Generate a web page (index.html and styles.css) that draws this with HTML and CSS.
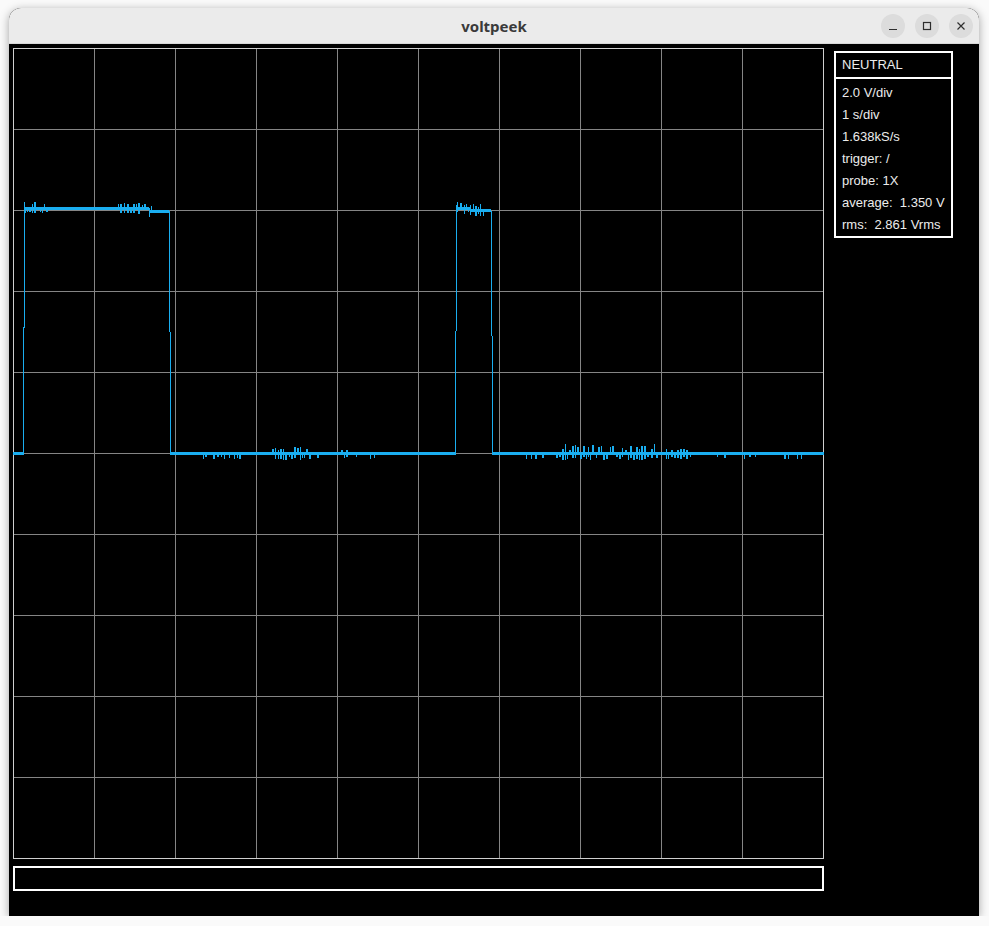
FILE: index.html
```html
<!DOCTYPE html>
<html lang="en">

<head>
    <meta charset="UTF-8">
    <meta name="viewport" content="width=device-width, initial-scale=1.0">
    <title>voltpeek</title>
    <link rel="stylesheet" href="styles.css">
</head>

<body>
    <div class="window">
        <div class="titlebar">
            <span class="title">voltpeek</span>
            <div class="controls">
                <span class="ctl">
                    <svg width="10" height="10" viewBox="0 0 10 10"><path d="M1 8.5H9" /></svg>
                </span>
                <span class="ctl">
                    <svg width="10" height="10" viewBox="0 0 10 10"><rect x="1.5" y="1.5" width="7" height="7" /></svg>
                </span>
                <span class="ctl">
                    <svg width="10" height="10" viewBox="0 0 10 10"><path d="M1.5 1.5L8.5 8.5M8.5 1.5L1.5 8.5" /></svg>
                </span>
            </div>
        </div>
        <div class="content">
            <div class="scope">
                <svg class="screen" width="811" height="811" viewBox="0 0 811 811">
                    <path class="grid" d="M81.5 0V811M162.5 0V811M243.5 0V811M324.5 0V811M405.5 0V811M486.5 0V811M567.5 0V811M648.5 0V811M729.5 0V811
                        M0 81.5H811M0 162.5H811M0 243.5H811M0 324.5H811M0 405.5H811M0 486.5H811M0 567.5H811M0 648.5H811M0 729.5H811" />
                    <rect class="frame" x="0.5" y="0.5" width="810" height="810" />
                    <path class="trace" id="trace" d="" />
                </svg>
                <div class="cmdline"></div>
            </div>
            <div class="panel">
                <div class="mode">NEUTRAL</div>
                <div class="readout">
                    <p>2.0 V/div</p>
                    <p>1 s/div</p>
                    <p>1.638kS/s</p>
                    <p>trigger: /</p>
                    <p>probe: 1X</p>
                    <p>average:  1.350 V</p>
                    <p>rms:  2.861 Vrms</p>
                </div>
            </div>
        </div>
    </div>
    <script>
        // one vertical span per pixel column, like the scope draws its samples
        let seed = 12345;
        function rnd() {
            seed = (seed * 16807) % 2147483647;
            return (seed - 1) / 2147483646;
        }

        const cols = [];
        for (let x = 0; x < 811; x++) cols.push([404, 407]);

        function level(from, to, lo) {
            for (let x = from; x <= to; x++) cols[x] = [lo, lo + 3];
        }

        function noise(from, to, prob, up, down) {
            for (let x = from; x <= to; x++) {
                if (rnd() > prob) continue;
                const w = rnd() < 0.5 ? 2 : 1;
                let lo = 0, hi = 0;
                if (up && rnd() < 0.6) lo = 2 + Math.floor(rnd() * up);
                if (!lo || rnd() < 0.5) hi = 2 + Math.floor(rnd() * down);
                for (let k = 0; k < w && x + k <= to; k++) {
                    cols[x + k][0] -= lo;
                    cols[x + k][1] += hi;
                }
                x += w;
            }
        }

        // high levels
        level(11, 135, 159);
        level(136, 155, 162);
        level(443, 456, 159);
        level(457, 477, 161);

        // baseline noise
        noise(190, 232, 0.25, 0, 3);
        noise(259, 297, 0.85, 5, 4);
        noise(302, 369, 0.2, 1, 3);
        noise(507, 532, 0.08, 0, 3);
        noise(543, 645, 0.9, 7, 4);
        noise(646, 677, 0.4, 2, 3);
        noise(685, 789, 0.12, 0, 3);

        // top noise
        noise(12, 22, 1, 5, 2);
        noise(26, 34, 0.6, 3, 2);
        noise(99, 138, 0.45, 3, 3);
        noise(444, 470, 0.7, 4, 3);

        // edges
        cols[10] = [279, 407];
        cols[11] = [154, 280];
        cols[156] = [163, 284];
        cols[157] = [284, 407];
        cols[442] = [283, 407];
        cols[443] = [157, 283];
        cols[478] = [163, 288];
        cols[479] = [288, 407];

        let d = '';
        cols.forEach((c, x) => {
            d += `M${x + 0.5} ${c[0]}V${c[1]}`;
        });
        document.getElementById('trace').setAttribute('d', d);
    </script>
</body>

</html>
```

FILE: styles.css
```css
body {
    background-color: #fafafa;
    margin: 0;
    padding: 0;
    overflow: hidden;
}

.window {
    margin: 8px 0 0 9px;
    width: 970px;
    height: 908px;
    background-color: #000;
    border-radius: 12px 12px 0 0;
    box-shadow: 0 2px 10px rgba(0, 0, 0, 0.35);
    overflow: hidden;
}

.titlebar {
    height: 36px;
    background-color: #ebebeb;
    border-bottom: 1px solid #d8d8d8;
    box-sizing: border-box;
    position: relative;
    display: flex;
    align-items: center;
    justify-content: center;
}

.title {
    font-family: "Noto Sans", "DejaVu Sans", sans-serif;
    font-weight: bold;
    font-size: 15px;
    color: #3a3a3a;
}

.controls {
    position: absolute;
    right: 6px;
    top: 6px;
    display: flex;
    gap: 10px;
}

.ctl {
    width: 24px;
    height: 24px;
    border-radius: 50%;
    background-color: #dcdcdc;
    display: flex;
    align-items: center;
    justify-content: center;
}

.ctl svg {
    fill: none;
    stroke: #2e2e2e;
    stroke-width: 1.2;
}

.content {
    display: flex;
    padding: 4px 0 0 4px;
}

.scope {
    display: flex;
    flex-direction: column;
}

.screen {
    display: block;
}

.grid {
    stroke: #858585;
    stroke-width: 1;
    fill: none;
}

.frame {
    stroke: #cfcfcf;
    stroke-width: 1;
    fill: none;
}

.trace {
    stroke: #1aaef0;
    stroke-width: 1;
    fill: none;
}

.cmdline {
    margin-top: 7px;
    width: 811px;
    height: 25px;
    box-sizing: border-box;
    border: 2px solid #fff;
}

.panel {
    margin: 3px 0 0 10px;
    width: 119px;
    box-sizing: border-box;
    border: 2px solid #fff;
    align-self: flex-start;
    font-family: "Liberation Sans", Arial, sans-serif;
    font-size: 13px;
    color: #ececec;
}

.mode {
    height: 26px;
    line-height: 24px;
    padding-left: 6px;
    box-sizing: border-box;
    border-bottom: 2px solid #fff;
}

.readout {
    padding: 3px 0 0 6px;
}

.readout p {
    margin: 0;
    height: 22px;
    line-height: 22px;
    white-space: pre;
}
```
